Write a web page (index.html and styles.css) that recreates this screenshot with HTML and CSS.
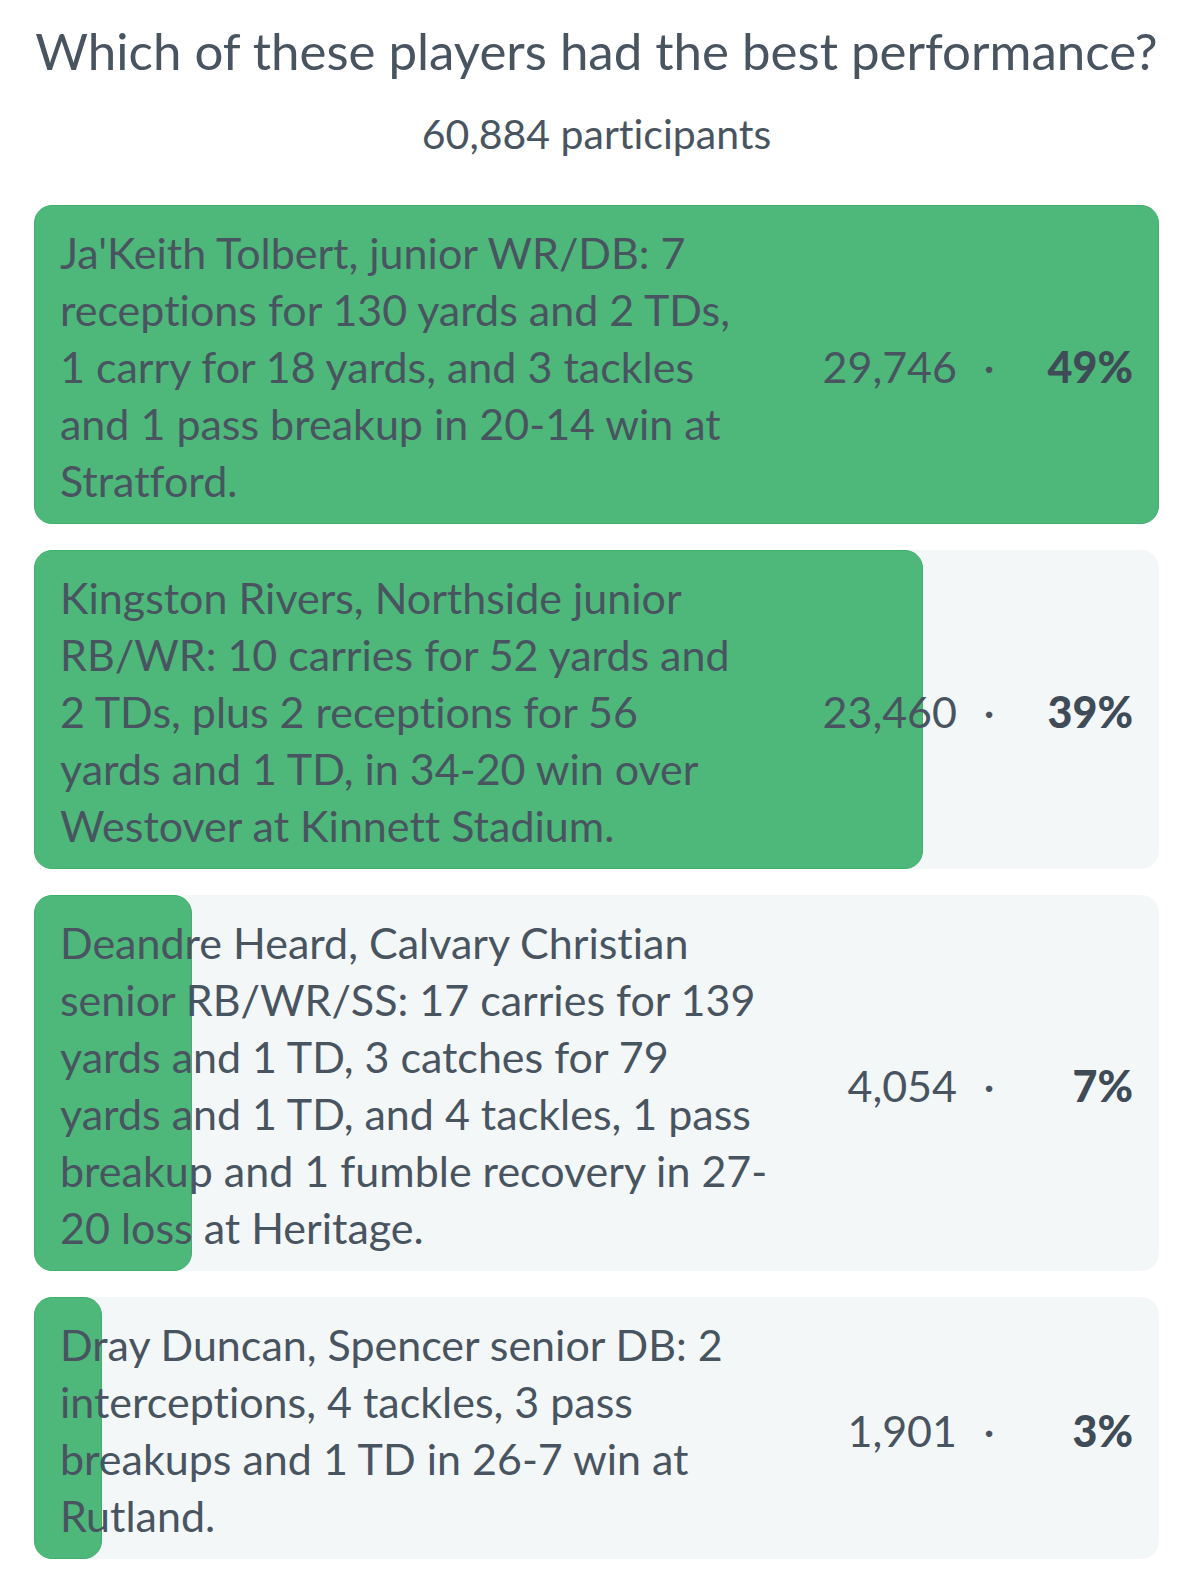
FILE: index.html
```html
<!DOCTYPE html>
<html lang="en">
<head>
<meta charset="utf-8">
<meta name="viewport" content="width=device-width, initial-scale=1">
<title>Which of these players had the best performance?</title>
<link rel="stylesheet" href="styles.css">
</head>
<body>
<main class="poll">
  <h1 class="question">Which of these players had the best performance?</h1>
  <p class="participants">60,884 participants</p>
  <ul class="results">
    <li class="result">
      <div class="fill" style="width: 100%"></div>
      <p class="answer">Ja'Keith Tolbert, junior WR/DB: 7<br>receptions for 130 yards and 2 TDs,<br>1 carry for 18 yards, and 3 tackles<br>and 1 pass breakup in 20-14 win at<br>Stratford.</p>
      <span class="votes">29,746</span><span class="dot">·</span><strong class="percent">49%</strong>
    </li>
    <li class="result">
      <div class="fill" style="width: 79%"></div>
      <p class="answer">Kingston Rivers, Northside junior<br>RB/WR: 10 carries for 52 yards and<br>2 TDs, plus 2 receptions for 56<br>yards and 1 TD, in 34-20 win over<br>Westover at Kinnett Stadium.</p>
      <span class="votes">23,460</span><span class="dot">·</span><strong class="percent">39%</strong>
    </li>
    <li class="result">
      <div class="fill" style="width: 14%"></div>
      <p class="answer">Deandre Heard, Calvary Christian<br>senior RB/WR/SS: 17 carries for 139<br>yards and 1 TD, 3 catches for 79<br>yards and 1 TD, and 4 tackles, 1 pass<br>breakup and 1 fumble recovery in 27-<br>20 loss at Heritage.</p>
      <span class="votes">4,054</span><span class="dot">·</span><strong class="percent">7%</strong>
    </li>
    <li class="result">
      <div class="fill" style="width: 6%"></div>
      <p class="answer">Dray Duncan, Spencer senior DB: 2<br>interceptions, 4 tackles, 3 pass<br>breakups and 1 TD in 26-7 win at<br>Rutland.</p>
      <span class="votes">1,901</span><span class="dot">·</span><strong class="percent">3%</strong>
    </li>
  </ul>
</main>
</body>
</html>
```
FILE: styles.css
```css
* {
  box-sizing: border-box;
}

body {
  margin: 0;
  background: #fff;
  color: #495461;
  font-family: Lato, "Liberation Sans", sans-serif;
  font-variant-ligatures: none;
}

.poll {
  padding: 19px 41px 20px 34px;
}

.question {
  margin: 0;
  font-size: 51px;
  line-height: 64px;
  font-weight: 400;
  text-align: center;
  white-space: nowrap;
}

.participants {
  margin: 24px 0 44px;
  font-size: 41px;
  line-height: 54px;
  text-align: center;
}

.results {
  display: grid;
  gap: 26px;
  margin: 0;
  padding: 0;
  list-style: none;
}

.result {
  position: relative;
  display: flex;
  align-items: center;
  padding: 19px 26px 15px;
  border-radius: 18px;
  background: #f3f7f8;
  font-size: 43px;
  line-height: 57px;
}

.fill {
  position: absolute;
  inset: 0 auto 0 0;
  border: 1px solid #3fb16b;
  border-radius: 18px;
  background: #4db879;
}

.answer,
.votes,
.dot,
.percent {
  position: relative;
}

.answer {
  flex: 1;
  margin: 0;
  white-space: nowrap;
}

.dot {
  width: 64px;
  text-align: center;
}

.percent {
  width: 112px;
  color: #3f4b57;
  font-weight: 900;
  text-align: right;
}
```
